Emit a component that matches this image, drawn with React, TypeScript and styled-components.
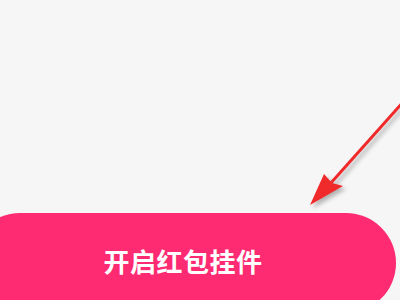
import styled, { createGlobalStyle } from "styled-components";

const Global = createGlobalStyle`
  html, body {
    margin: 0;
    padding: 0;
    background: #f6f6f6;
  }
`;

const Screen = styled.div`
  position: relative;
  width: 400px;
  height: 300px;
  overflow: hidden;
  background: #f6f6f6;
  display: flex;
  flex-direction: column;
  padding-top: 213px;
  box-sizing: border-box;
`;

const OpenButton = styled.button`
  margin-left: -30px;
  width: 426px;
  height: 100px;
  flex-shrink: 0;
  border: none;
  border-radius: 50px;
  background: #fe2a72;
  color: #fff;
  font-family: "Noto Sans CJK SC", "Noto Sans", sans-serif;
  font-size: 26px;
  font-weight: 700;
  letter-spacing: 0.5px;
  display: flex;
  align-items: flex-start;
  justify-content: center;
  padding: 30px 0 0;
  line-height: 36px;
  cursor: pointer;
`;

const Pointer = styled.svg`
  position: absolute;
  left: 0;
  top: 0;
  width: 400px;
  height: 300px;
  pointer-events: none;
  filter: drop-shadow(3px 3px 2px rgba(0, 0, 0, 0.28));
`;

export default function App() {
  return (
    <>
      <Global />
      <Screen>
        <OpenButton>开启红包挂件</OpenButton>
        <Pointer viewBox="0 0 400 300">
          <line x1="404" y1="101" x2="330" y2="184" stroke="#f02a2a" strokeWidth="3" strokeLinecap="round" />
          <polygon points="310,205 324,174 332,183 343,186" fill="#f02a2a" />
        </Pointer>
      </Screen>
    </>
  );
}
